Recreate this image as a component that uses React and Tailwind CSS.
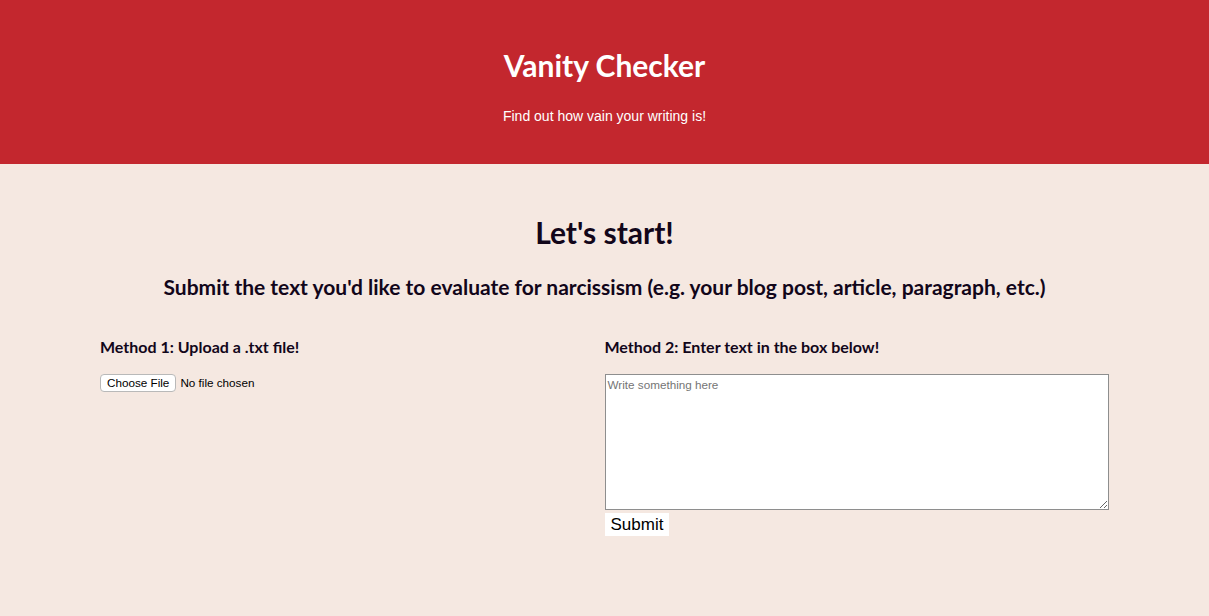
export default function App() {
  return (
    <div className="min-h-screen bg-[#f5e8e1] font-['Lato',sans-serif] text-[#12061a]">
      <header className="h-[164px] bg-[#c3272e] text-white text-center pt-[45px]">
        <h1 className="text-[30px] font-bold leading-[40px]">Vanity Checker</h1>
        <p className="mt-[22px] text-[14px] leading-[18px] font-['Liberation_Sans',sans-serif]">Find out how vain your writing is!</p>
      </header>

      <main className="w-[1009px] mx-auto pt-[49px]">
        <h2 className="text-center text-[30px] font-bold leading-[38px]">Let's start!</h2>
        <h3 className="mt-[22px] text-center text-[21px] font-bold leading-[28px]">
          Submit the text you'd like to evaluate for narcissism (e.g. your blog post, article, paragraph, etc.)
        </h3>

        <div className="mt-[35px] grid grid-cols-2">
          <div>
            <h4 className="text-[16px] font-bold leading-[22px]">Method 1: Upload a .txt file!</h4>
            <div className="mt-[16px] flex items-center font-['Liberation_Sans',sans-serif] text-[11.7px]">
              <button className="h-[18px] px-[6px] bg-white border border-[#b9b9b9] rounded-[4px] text-[11.7px] leading-[16px] text-black">
                Choose File
              </button>
              <span className="ml-[4px] text-black">No file chosen</span>
            </div>
          </div>
          <div>
            <h4 className="text-[16px] font-bold leading-[22px]">Method 2: Enter text in the box below!</h4>
            <textarea
              placeholder="Write something here"
              className="mt-[16px] block w-[504px] h-[136px] bg-white border border-[#8e8e8e] px-[2px] py-[1px] text-[11.7px] font-['Liberation_Sans',sans-serif] placeholder:text-[#757575] outline-none"
            />
            <button className="mt-[3px] bg-white px-[6px] h-[23px] text-[17px] leading-[20px] font-['Liberation_Sans',sans-serif] text-black">
              Submit
            </button>
          </div>
        </div>
      </main>
    </div>
  )
}
